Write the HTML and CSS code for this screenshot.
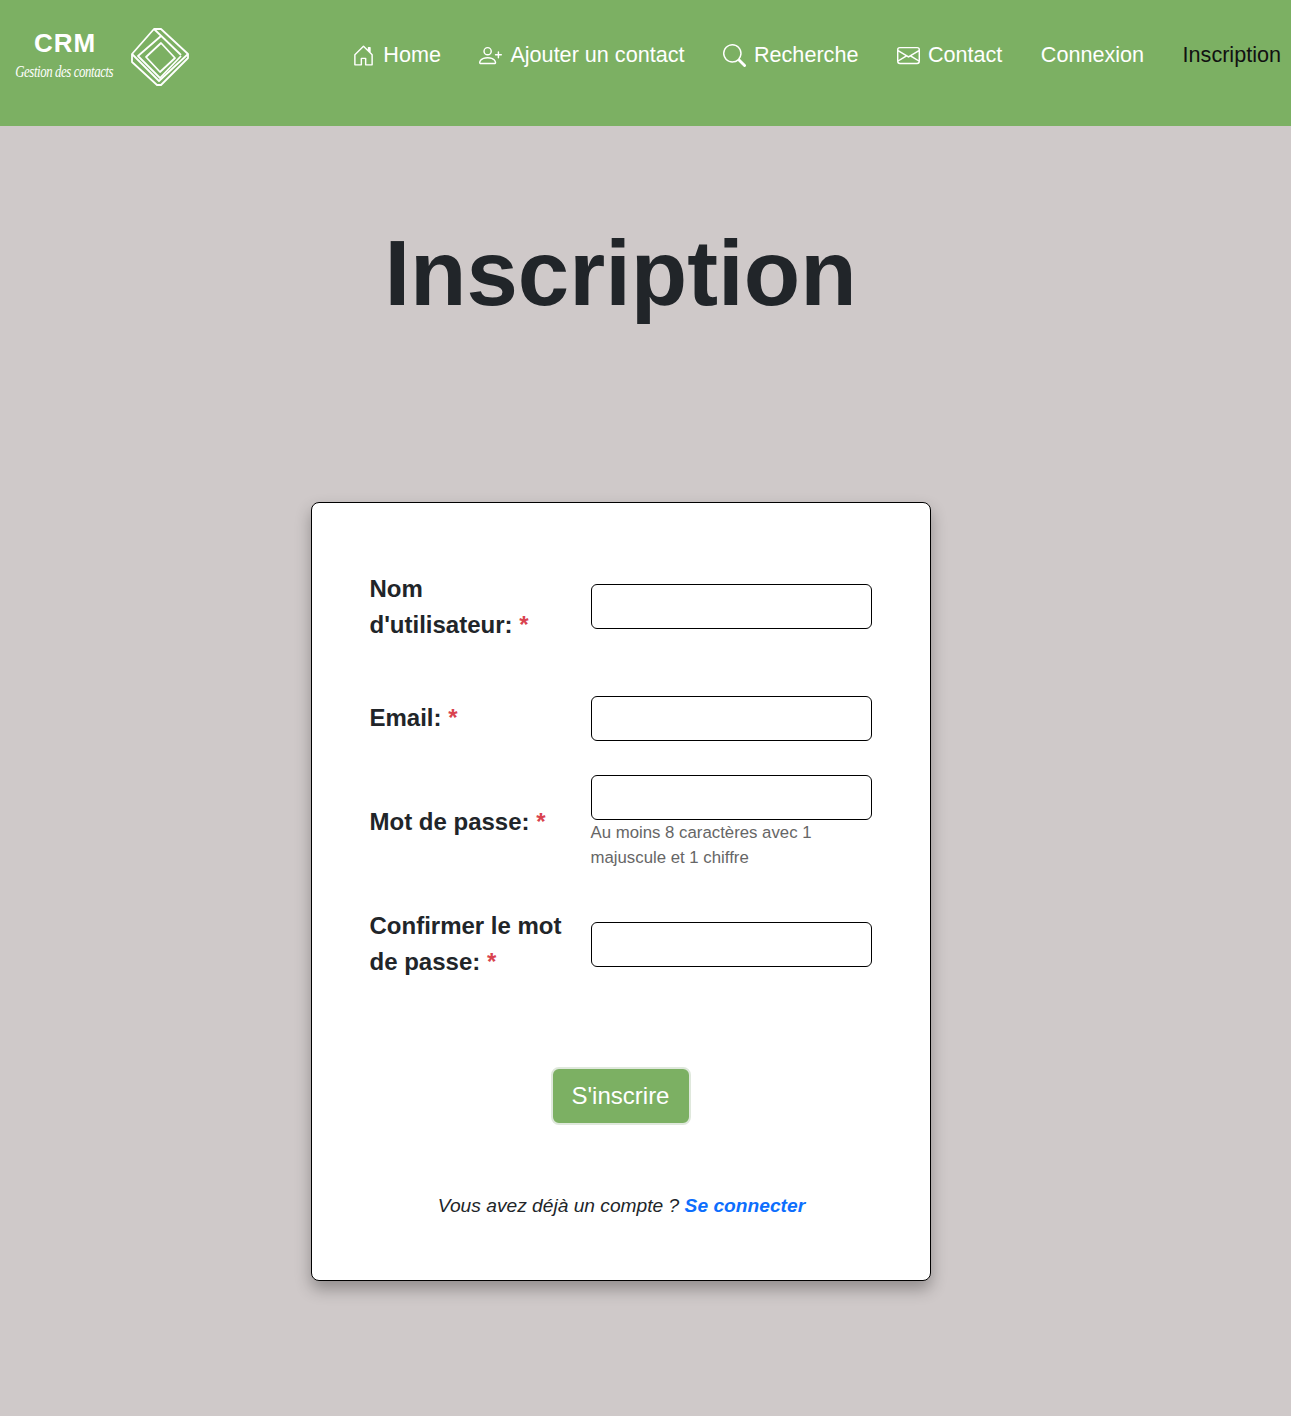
FILE: index.html
```html
<!DOCTYPE html>
<html lang="fr">
<head>
    <meta charset="UTF-8">
    <meta name="viewport" content="width=device-width, initial-scale=1.0">
    <title>Inscription</title>
    <link rel="stylesheet" href="styles.css">
</head>
<body>
    <header class="topbar">
        <a class="logo" href="#">
            <span class="logo-text">
                <span class="logo-crm">CRM</span>
                <span class="logo-sub">Gestion des contacts</span>
            </span>
            <svg class="logo-mark" viewBox="0 0 60 60" fill="none" stroke="#fff" stroke-width="1.8" stroke-linejoin="round">
                <path d="M24 2 L31 2 L58 27 L58 31 L31 58 L27 58 L2 35 L2 27 Z"/>
                <path d="M2 27 L29 54 L58 27"/>
                <path d="M24 2 L51 28"/>
                <path d="M31 9 L8 29 L30 51 L51 29"/>
                <path d="M31 16 L45 31 L30 45 L16 30 Z"/>
            </svg>
        </a>
        <nav class="nav">
            <a class="nav-link" href="#">
                <svg class="icon" viewBox="0 0 16 16" fill="currentColor"><path d="M8.354 1.146a.5.5 0 0 0-.708 0l-6 6A.5.5 0 0 0 1.5 7.5v7a.5.5 0 0 0 .5.5h4.5a.5.5 0 0 0 .5-.5v-4h2v4a.5.5 0 0 0 .5.5H14a.5.5 0 0 0 .5-.5v-7a.5.5 0 0 0-.146-.354L13 5.793V2.5a.5.5 0 0 0-.5-.5h-1a.5.5 0 0 0-.5.5v1.293L8.354 1.146zM2.5 14V7.707l5.5-5.5 5.5 5.5V14H10v-4a.5.5 0 0 0-.5-.5h-3a.5.5 0 0 0-.5.5v4H2.5z"/></svg>
                Home
            </a>
            <a class="nav-link" href="#">
                <svg class="icon" viewBox="0 0 16 16" fill="currentColor"><path d="M6 8a3 3 0 1 0 0-6 3 3 0 0 0 0 6zm2-3a2 2 0 1 1-4 0 2 2 0 0 1 4 0zm4 8c0 1-1 1-1 1H1s-1 0-1-1 1-4 6-4 6 3 6 4zm-1-.004c-.001-.246-.154-.986-.832-1.664C9.516 10.68 8.289 10 6 10c-2.29 0-3.516.68-4.168 1.332-.678.678-.83 1.418-.832 1.664h10z"/><path d="M13.5 5a.5.5 0 0 1 .5.5V7h1.5a.5.5 0 0 1 0 1H14v1.5a.5.5 0 0 1-1 0V8h-1.5a.5.5 0 0 1 0-1H13V5.5a.5.5 0 0 1 .5-.5z"/></svg>
                Ajouter un contact
            </a>
            <a class="nav-link" href="#">
                <svg class="icon" viewBox="0 0 16 16" fill="currentColor"><path d="M11.742 10.344a6.5 6.5 0 1 0-1.397 1.398h-.001c.03.04.062.078.098.115l3.85 3.85a1 1 0 0 0 1.415-1.414l-3.85-3.85a1.007 1.007 0 0 0-.115-.1zM12 6.5a5.5 5.5 0 1 1-11 0 5.5 5.5 0 0 1 11 0z"/></svg>
                Recherche
            </a>
            <a class="nav-link" href="#">
                <svg class="icon" viewBox="0 0 16 16" fill="currentColor"><path d="M0 4a2 2 0 0 1 2-2h12a2 2 0 0 1 2 2v8a2 2 0 0 1-2 2H2a2 2 0 0 1-2-2V4Zm2-1a1 1 0 0 0-1 1v.217l7 4.2 7-4.2V4a1 1 0 0 0-1-1H2Zm13 2.383-4.708 2.825L15 11.105V5.383Zm-.034 6.876-5.64-3.471L8 9.583l-1.326-.795-5.64 3.47A1 1 0 0 0 2 13h12a1 1 0 0 0 .966-.741ZM1 11.105l4.708-2.897L1 5.383v5.722Z"/></svg>
                Contact
            </a>
            <a class="nav-link" href="#">Connexion</a>
            <a class="nav-link active" href="#">Inscription</a>
        </nav>
    </header>

    <main class="page">
        <h1 class="title">Inscription</h1>

        <form class="card">
            <div class="row row-user">
                <label class="label" for="username">Nom d'utilisateur: <span class="req">*</span></label>
                <input class="field" type="text" id="username">
            </div>
            <div class="row row-email">
                <label class="label" for="email">Email: <span class="req">*</span></label>
                <input class="field" type="email" id="email">
            </div>
            <div class="row row-pass">
                <label class="label" for="password">Mot de passe: <span class="req">*</span></label>
                <div class="field-wrap">
                    <input class="field" type="password" id="password">
                    <p class="hint">Au moins 8 caractères avec 1 majuscule et 1 chiffre</p>
                </div>
            </div>
            <div class="row row-confirm">
                <label class="label" for="confirm">Confirmer le mot de passe: <span class="req">*</span></label>
                <input class="field" type="password" id="confirm">
            </div>
            <div class="actions">
                <button class="submit" type="submit">S'inscrire</button>
            </div>
            <p class="login">Vous avez déjà un compte ? <a href="#">Se connecter</a></p>
        </form>
    </main>
</body>
</html>
```

FILE: styles.css
```css
:root {
    --green: #7cb063;
    --page-bg: #cfc9c9;
    --text: #212529;
}
* {
    box-sizing: border-box;
}
body {
    margin: 0;
    min-height: 1416px;
    font-family: "Liberation Sans", Arial, sans-serif;
    color: var(--text);
    background-color: var(--page-bg);
}
a {
    text-decoration: none;
}

/* Barre du haut */
.topbar {
    display: flex;
    align-items: center;
    justify-content: space-between;
    height: 126px;
    padding: 0 10px 16px 14px;
    background-color: var(--green);
}
.logo {
    display: flex;
    align-items: center;
    gap: 16px;
    color: #fff;
    margin-top: 4px;
}
.logo-text {
    display: flex;
    flex-direction: column;
    align-items: center;
    width: 100px;
}
.logo-crm {
    padding-left: 2px;
    font-size: 26px;
    line-height: 30px;
    font-weight: bold;
    letter-spacing: 1px;
}
.logo-sub {
    font-family: "Liberation Serif", serif;
    font-style: italic;
    font-size: 16px;
    line-height: 28px;
    letter-spacing: -0.5px;
    white-space: nowrap;
    transform: scaleX(0.8);
}
.logo-mark {
    width: 60px;
    height: 60px;
}
.nav {
    display: flex;
    align-items: center;
    gap: 38.5px;
}
.nav-link {
    display: flex;
    align-items: center;
    gap: 8px;
    font-size: 21.6px;
    line-height: 34px;
    color: #fff;
}
.nav-link.active {
    color: #111;
}
.icon {
    width: 23px;
    height: 23px;
}

/* Formulaire */
.page {
    display: flex;
    flex-direction: column;
    align-items: center;
    padding-right: 50px;
}
.title {
    margin: 94px 0 0;
    font-size: 92.4px;
    line-height: 106px;
    font-weight: bold;
}
.card {
    width: 620px;
    margin-top: 176px;
    padding: 68px 58px 59px;
    background-color: #fff;
    border: 1px solid #000;
    border-radius: 8px;
    box-shadow: 0 8px 16px rgba(0, 0, 0, 0.3);
}
.row {
    display: grid;
    grid-template-columns: 221px 281px;
    align-items: center;
}
.row-user { margin-bottom: 53px; }
.row-user .field { margin-bottom: 1px; }
.row-email { margin-bottom: 34px; }
.row-pass { margin-bottom: 38px; }
.row-confirm { margin-bottom: 87px; }
.label {
    padding-right: 24px;
    font-size: 24px;
    line-height: 36px;
    font-weight: bold;
}
.row-email .label,
.row-pass .label {
    padding-bottom: 2px;
}
.req {
    color: #d9434f;
}
.field {
    display: block;
    width: 100%;
    height: 45px;
    background-color: #fff;
    border: 1px solid #000;
    border-radius: 6px;
}
.hint {
    margin: 0;
    font-size: 16.8px;
    line-height: 25px;
    color: #666;
}
.actions {
    display: flex;
    justify-content: center;
}
.submit {
    width: 140px;
    height: 58px;
    font-family: inherit;
    font-size: 24px;
    color: #fff;
    background-color: var(--green);
    border: 2px solid #dfe8dc;
    border-radius: 8px;
}
.login {
    margin: 66px 0 0;
    padding-left: 2px;
    text-align: center;
    font-size: 19.2px;
    line-height: 30px;
    font-style: italic;
}
.login a {
    font-weight: bold;
    color: #0d6efd;
}
```
